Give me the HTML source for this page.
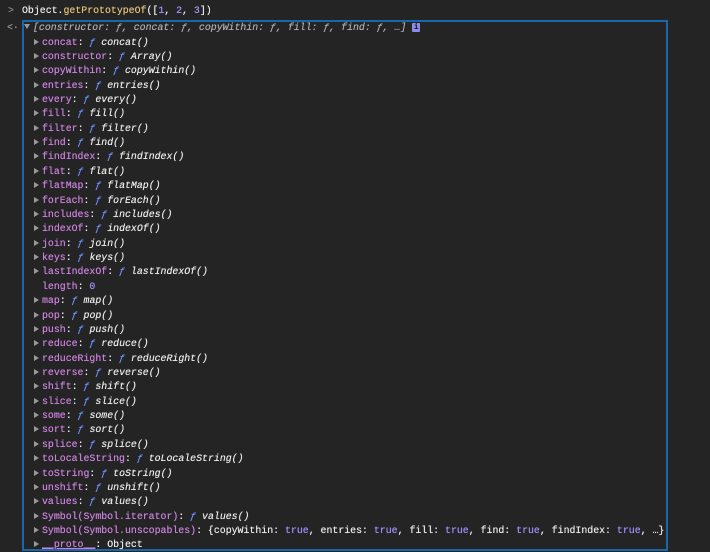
<!DOCTYPE html>
<html><head><meta charset="utf-8"><style>
html,body{margin:0;padding:0;background:#242424;width:710px;height:552px;overflow:hidden}
body{font-family:"Liberation Mono","DejaVu Sans Mono",monospace;font-size:9.9px;color:#ececec;position:relative}
.l{position:absolute;white-space:pre;line-height:14px;height:14px;text-shadow:0 0 0.4px currentColor}
.k{color:#cc82de}
.f{color:#7090ff;font-style:italic}
.i{font-style:italic}
.n{color:#9f90ff}
.g{color:#adadad}
.y{color:#e5c07b}
.t{display:inline-block;width:0;height:0;border-top:3px solid transparent;border-bottom:3px solid transparent;border-left:5px solid #999;margin-right:3px;vertical-align:0px}
.td{display:inline-block;width:0;height:0;border-left:3px solid transparent;border-right:3px solid transparent;border-top:5px solid #999;margin-right:3px;vertical-align:1px}
#box{position:absolute;left:22px;top:20px;width:642px;height:527px;border:2px solid #1a66aa}
.info{display:inline-block;background:#8c8cf0;color:#242424;font-size:8px;font-style:normal;width:8px;height:9px;line-height:9px;text-align:center;border-radius:1px;vertical-align:1px;font-weight:bold}
</style></head><body>
<div class="l" style="left:8px;top:4px;color:#888">&gt;</div>
<div class="l" style="left:22px;top:4px">Object.<span class="y">getPrototypeOf</span>([<span class="n">1</span>, <span class="n">2</span>, <span class="n">3</span>])</div>
<div class="l" style="left:7px;top:21px;color:#999">&lt;·</div>
<div id="box"></div>
<div class="l g i" style="left:24px;top:21px"><span class="td"></span>[constructor: ƒ, concat: ƒ, copyWithin: ƒ, fill: ƒ, find: ƒ, …] <span class="info">i</span></div>
<div id="rows"></div>
<script>
var rows=[["concat","concat()"],["constructor","Array()"],["copyWithin","copyWithin()"],["entries","entries()"],["every","every()"],["fill","fill()"],["filter","filter()"],["find","find()"],["findIndex","findIndex()"],["flat","flat()"],["flatMap","flatMap()"],["forEach","forEach()"],["includes","includes()"],["indexOf","indexOf()"],["join","join()"],["keys","keys()"],["lastIndexOf","lastIndexOf()"],["length",null],["map","map()"],["pop","pop()"],["push","push()"],["reduce","reduce()"],["reduceRight","reduceRight()"],["reverse","reverse()"],["shift","shift()"],["slice","slice()"],["some","some()"],["sort","sort()"],["splice","splice()"],["toLocaleString","toLocaleString()"],["toString","toString()"],["unshift","unshift()"],["values","values()"],["Symbol(Symbol.iterator)","values()"],["Symbol(Symbol.unscopables)","U"],["__proto__","O"]];
var h="";
rows.forEach(function(r,i){
 var top=35.5+i*14.37;
 var tri=r[1]===null?'<span style="display:inline-block;width:8px"></span>':'<span class="t"></span>';
 var v;
 if(r[1]===null)v='<span class="n">0</span>';
 else if(r[1]=="U")v='{copyWithin: <span class="n">true</span>, entries: <span class="n">true</span>, fill: <span class="n">true</span>, find: <span class="n">true</span>, findIndex: <span class="n">true</span>, …}';
 else if(r[1]=="O")v='Object';
 else v='<span class="f">ƒ</span> <span class="i">'+r[1]+'</span>';
 var key=r[0]=="__proto__"?'<span class="k" style="text-decoration:underline">__proto__</span>':'<span class="k">'+r[0]+'</span>';
 h+='<div class="l" style="left:34px;top:'+top+'px">'+tri+key+': '+v+'</div>';
});
document.getElementById("rows").innerHTML=h;
</script>
</body></html>
